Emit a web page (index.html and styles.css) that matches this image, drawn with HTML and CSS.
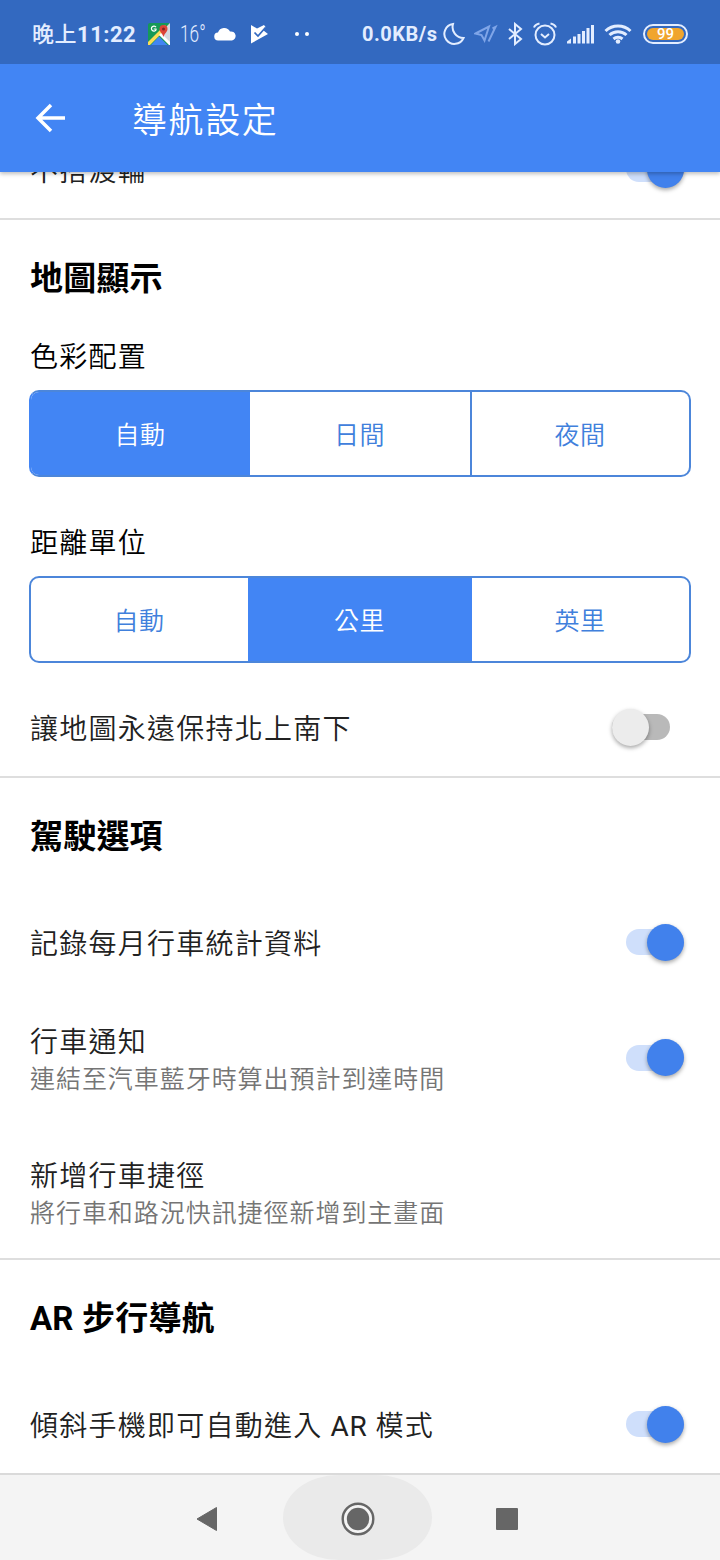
FILE: index.html
```html
<!DOCTYPE html>
<html lang="zh-Hant">
<head>
    <meta charset="UTF-8">
    <meta name="viewport" content="width=device-width, initial-scale=1.0">
    <title>導航設定</title>
    <link rel="stylesheet" href="styles.css">
</head>
<body>

    <div class="status-bar">
        <div class="status-left">
            <span class="clock">晚上<b>11:22</b></span>
            <svg class="maps-icon" width="22" height="22" viewBox="0 0 22 22">
                <rect width="22" height="22" rx="2" fill="#159957"/>
                <path d="M12 10L22 0v22z" fill="#d5d9de"/>
                <path d="M0 19L17 2l2 3L2 22H0z" fill="#fbdc55"/>
                <path d="M11 12l10 10h1v-3l-9-9z" fill="#fff"/>
                <path d="M3 22l8-8.500 8.500 8.500z" fill="#4285f4"/>
                <path d="M8 4.200A2.500 2.500 0 1 0 8 7V6H5.700" fill="none" stroke="#fff" stroke-width="1.200"/>
                <path d="M15.500 2a4 4 0 0 0-4 4c0 3 3 4 4 8 1-4 4-5 4-8a4 4 0 0 0-4-4z" fill="#dc4437"/>
                <circle cx="15.500" cy="6" r="1.500" fill="#7d2720"/>
            </svg>
            <span class="temp">16°</span>
            <svg class="cloud-icon" width="22" height="14" viewBox="0 0 22 14">
                <path d="M4.500 13.500A4 4 0 0 1 4 5.500 6.500 6.500 0 0 1 16 4.500a4.500 4.500 0 0 1 2 9z" fill="#fff"/>
            </svg>
            <svg class="play-icon" width="18" height="20" viewBox="0 0 18 20">
                <path d="M1 1l6 3.500L14 1l1.500 2-2 3.500L18 10 1 19.500z" fill="#fff"/>
                <path d="M4.500 8.500L8 12l7.500-8.500" fill="none" stroke="#3369c0" stroke-width="1.700"/>
            </svg>
            <span class="more"><i></i><i></i></span>
        </div>
        <div class="status-right">
            <span class="speed">0.0KB/s</span>
            <svg class="moon-icon" width="24" height="24" viewBox="0 0 24 24">
                <path d="M11 2A10 10 0 1 0 21.500 16 11 11 0 0 1 11 2z"/>
            </svg>
            <svg class="location-icon" width="24" height="22" viewBox="0 0 24 22">
                <path d="M1.500 10.500L15 3.500l-4.500 14-3-5.500zM14.500 18.500l7-14.500-3 1.500"/>
            </svg>
            <svg class="bluetooth-icon" width="16" height="24" viewBox="0 0 16 24">
                <path d="M2 7l12 10-6 5V2l6 5L2 17"/>
            </svg>
            <svg class="alarm-icon" width="24" height="24" viewBox="0 0 24 24">
                <circle cx="12" cy="13" r="9.500"/>
                <path d="M1 5.500q1-3 5.500-4M23 5.500q-1-3-5.500-4M8 12l4 3.500 4-3.500"/>
            </svg>
            <svg class="signal-icon" width="28" height="20" viewBox="0 0 28 20">
                <path d="M0 19.500v-2l4-3v5zM6 12.500h3v7H6zM10.500 10h3v9.500h-3zM15 7h3v12.500h-3zM19.500 4h3v15.500h-3zM24 1h3v18.500h-3z"/>
            </svg>
            <svg class="wifi-icon" width="28" height="20" viewBox="0 0 28 20">
                <path d="M1.500 7a18 18 0 0 1 25 0M5.500 11a12.500 12.500 0 0 1 17 0M9.500 15a7 7 0 0 1 9 0"/>
                <circle cx="14" cy="17.500" r="2.300"/>
            </svg>
            <span class="battery"><span class="level">99</span></span>
        </div>
    </div>

    <header class="toolbar">
        <svg class="back-icon" width="32" height="32" viewBox="0 0 32 32">
            <path d="M31 16H4M17 3L4 16l13 13"/>
        </svg>
        <h1>導航設定</h1>
    </header>

    <main class="settings">
        <section>
            <div class="row">
                <div class="label">不搭渡輪</div>
                <span class="switch on"></span>
            </div>
        </section>

        <section>
            <h2>地圖顯示</h2>
            <div class="label group-label">色彩配置</div>
            <div class="segments">
                <button class="selected">自動</button>
                <button>日間</button>
                <button>夜間</button>
            </div>
            <div class="label group-label second">距離單位</div>
            <div class="segments units">
                <button>自動</button>
                <button class="selected">公里</button>
                <button>英里</button>
            </div>
            <div class="row north-up">
                <div class="label">讓地圖永遠保持北上南下</div>
                <span class="switch"></span>
            </div>
        </section>

        <section>
            <h2>駕駛選項</h2>
            <div class="row">
                <div class="label">記錄每月行車統計資料</div>
                <span class="switch on"></span>
            </div>
            <div class="row two-line notify">
                <div>
                    <div class="label">行車通知</div>
                    <div class="summary">連結至汽車藍牙時算出預計到達時間</div>
                </div>
                <span class="switch on"></span>
            </div>
            <div class="row two-line">
                <div>
                    <div class="label">新增行車捷徑</div>
                    <div class="summary">將行車和路況快訊捷徑新增到主畫面</div>
                </div>
            </div>
        </section>

        <section>
            <h2>AR 步行導航</h2>
            <div class="row">
                <div class="label">傾斜手機即可自動進入 <span class="latin">AR</span> 模式</div>
                <span class="switch on"></span>
            </div>
        </section>
    </main>

    <nav class="nav-bar">
        <div class="nav-key back">
            <svg width="22" height="26" viewBox="0 0 22 26"><path d="M1 13L20.500 1.500v23z" fill="#666" stroke="#666" stroke-linejoin="round"/></svg>
        </div>
        <div class="nav-key home">
            <svg width="34" height="34" viewBox="0 0 34 34">
                <circle cx="17" cy="17" r="15.300" fill="#f4f4f4" stroke="#666" stroke-width="2.400"/>
                <circle cx="17" cy="17" r="11.200" fill="#666"/>
            </svg>
        </div>
        <div class="nav-key">
            <svg width="22" height="22" viewBox="0 0 22 22"><rect width="22" height="22" rx="1" fill="#666"/></svg>
        </div>
    </nav>

</body>
</html>
```
FILE: styles.css
```css
* {
    box-sizing: border-box;
}

body {
    margin: 0;
    height: 1560px;
    display: flex;
    flex-direction: column;
    overflow: hidden;
    background: #fff;
    color: #212121;
    font-family: Roboto, "Noto Sans CJK TC", sans-serif;
}

/* status bar */
.status-bar {
    height: 64px;
    flex: none;
    display: flex;
    justify-content: space-between;
    align-items: center;
    padding: 4px 32px 0;
    background: #3369c0;
    color: #e3edff;
    z-index: 2;
}

.status-left, .status-right {
    display: flex;
    align-items: center;
    white-space: nowrap;
}

.clock {
    width: 105px;
    margin-top: -4px;
    font-size: 22px;
    font-weight: 500;
    letter-spacing: 0.5px;
}

.maps-icon { margin-left: 11px; }

.temp {
    width: 24px;
    margin-left: 10px;
    font-size: 23px;
    font-weight: 350;
    transform: scaleX(0.75);
    transform-origin: left;
}

.cloud-icon { margin-left: 10px; }
.play-icon { margin-left: 14px; }

.more {
    display: flex;
    gap: 6px;
    margin-left: 27px;
}

.more i {
    width: 4px;
    height: 4px;
    border-radius: 50%;
    background: #fff;
}

.speed {
    width: 76px;
    font-size: 20px;
    font-weight: 700;
    letter-spacing: 0.5px;
}

.status-right svg {
    fill: none;
    stroke: #e3edff;
    stroke-width: 2;
}

.moon-icon { margin-left: 4px; }

.status-right .location-icon {
    margin-left: 8px;
    stroke: #7fa5e8;
}

.bluetooth-icon { margin-left: 9px; }
.alarm-icon { margin-left: 10px; }

.status-right .signal-icon {
    margin-left: 10px;
    fill: #e3edff;
    stroke: none;
}

.status-right .wifi-icon {
    margin-left: 9px;
    stroke-width: 3;
}

.wifi-icon circle {
    fill: #e3edff;
    stroke: none;
}

.battery {
    width: 45px;
    height: 20px;
    margin-left: 11px;
    padding: 2px;
    border: 2px solid #e3edff;
    border-radius: 10px;
}

.level {
    display: block;
    height: 12px;
    border-radius: 6px;
    background: #f0a52d;
    color: #fff;
    font-size: 15px;
    font-weight: 500;
    line-height: 13px;
    text-align: center;
}

/* toolbar */
.toolbar {
    height: 108px;
    flex: none;
    display: flex;
    align-items: center;
    padding-left: 35px;
    background: #4285f4;
    color: #fff;
    box-shadow: 0 2px 4px rgba(0, 0, 0, 0.25);
    z-index: 1;
}

.back-icon {
    margin-left: -1px;
    fill: none;
    stroke: #fff;
    stroke-width: 3.5;
}

h1 {
    margin: 7px 0 0 66px;
    font-size: 35px;
    font-weight: 350;
    letter-spacing: 1.6px;
    line-height: 50px;
}

/* list is scrolled to the end */
.settings {
    height: 1301px;
    flex: none;
    display: flex;
    flex-direction: column;
    justify-content: flex-end;
    overflow: hidden;
}

section {
    flex: none;
}

section + section {
    border-top: 2px solid #dedede;
}

h2 {
    height: 116px;
    margin: 0;
    padding-left: 30px;
    color: #000;
    font-size: 33px;
    font-weight: 700;
    letter-spacing: 0.2px;
    line-height: 117px;
}

.label {
    padding-top: 4px;
    font-size: 28px;
    font-weight: 350;
    letter-spacing: 1.25px;
    line-height: 40px;
}

.latin {
    font-weight: 400;
    letter-spacing: 0.6px;
}

.group-label {
    margin-bottom: 12px;
    padding-top: 2px;
    padding-left: 30px;
    color: #000;
}

.group-label.second { margin-top: 45px; }

.segments {
    height: 87px;
    margin: 0 29px;
    display: grid;
    grid-template-columns: 219px 220px 1fr;
    border: 2px solid #4c86da;
    border-radius: 10px;
    background: #fff;
    overflow: hidden;
}

.segments.units { grid-template-columns: 217px 224px 1fr; }

.segments button {
    padding: 0 1px 1px 0;
    border: none;
    background: none;
    color: #4080dc;
    font-family: inherit;
    font-size: 25px;
    font-weight: 350;
    letter-spacing: 0.6px;
}

.segments button:last-child { border-left: 2px solid #4c86da; }
.segments.units button:last-child { border-left: none; }

.segments .selected {
    background: #4285f4;
    color: #fff;
}

/* keeps the filled end as blue as the segment itself */
.segments:not(.units) { border-left-color: #4285f4; }

.row {
    height: 97px;
    display: flex;
    justify-content: space-between;
    align-items: center;
    padding: 0 36px 0 30px;
}

.row.north-up {
    height: 96px;
    margin-top: 17px;
    padding-right: 50px;
}

.two-line { height: 133px; }
.two-line.notify { height: 134px; }

.summary {
    color: #757575;
    font-size: 25px;
    font-weight: 350;
    letter-spacing: 0.95px;
    line-height: 34px;
}

.switch {
    width: 58px;
    height: 26px;
    margin-bottom: 1px;
    display: flex;
    align-items: center;
    border-radius: 13px;
    background: #b9b9b9;
}

.north-up .switch { margin-bottom: 2px; }

.switch::before {
    content: "";
    width: 37px;
    height: 37px;
    flex: none;
    border-radius: 50%;
    background: #ececec;
    box-shadow: 0 2px 4px rgba(0, 0, 0, 0.35);
}

.switch.on {
    justify-content: flex-end;
    background: #cfdffb;
}

.switch.on::before { background: #4181ec; }

/* system navigation */
.nav-bar {
    height: 87px;
    flex: none;
    display: flex;
    justify-content: center;
    border-top: 2px solid #dadada;
    background: #f4f4f4;
    padding-right: 5px;
}

.nav-key {
    width: 149px;
    display: flex;
    align-items: center;
    justify-content: center;
    padding-top: 2px;
}

.nav-key.back { padding-right: 4px; }

.nav-key.home {
    border-radius: 56px / 43px;
    background: #eaeaea;
}
```
